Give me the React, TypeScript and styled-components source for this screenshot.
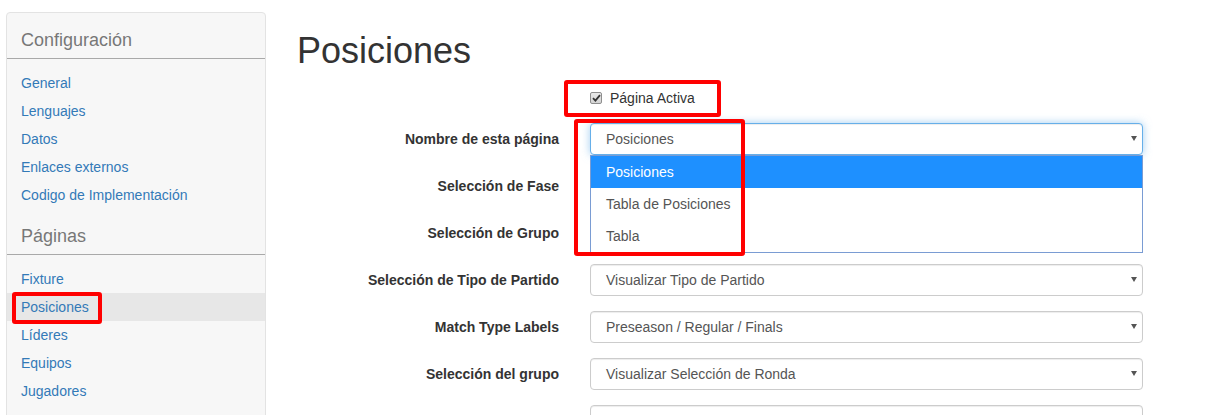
import React from "react";
import styled, { createGlobalStyle } from "styled-components";

const Global = createGlobalStyle`
  html, body { margin: 0; padding: 0; background: #fff; }
  body { font-family: "Liberation Sans", Arial, sans-serif; font-size: 14px; color: #333; }
  * { box-sizing: border-box; }
`;

const Page = styled.div`
  display: flex;
  align-items: flex-start;
  padding: 12px 0 0 6px;
  gap: 29px;
  height: 415px;
  overflow: hidden;
`;

const Sidebar = styled.nav`
  width: 260px;
  flex: 0 0 260px;
  background: #f7f7f7;
  border: 1px solid #e3e3e3;
  border-radius: 4px;
  padding-bottom: 40px;
`;

const SectionTitle = styled.div`
  margin-top: 17px;
  padding: 0 14px 8px;
  border-bottom: 1px solid #a9a9a9;
  font-size: 18px;
  line-height: 20px;
  color: #777;
`;

const LinkList = styled.ul`
  list-style: none;
  margin: 10px 0 0;
  padding: 0;
`;

const LinkItem = styled.li<{ $active?: boolean }>`
  position: relative;
  height: 28px;
  padding: 4px 14px;
  line-height: 20px;
  background: ${(p) => (p.$active ? "#e7e7e7" : "transparent")};
`;

const SideLink = styled.a`
  color: #337ab7;
  text-decoration: none;
  font-size: 14px;
`;

const Highlight = styled.span<{ $l: number; $t: number; $w: number; $h: number }>`
  position: absolute;
  left: ${(p) => p.$l}px;
  top: ${(p) => p.$t}px;
  width: ${(p) => p.$w}px;
  height: ${(p) => p.$h}px;
  border: 4px solid #ff0000;
  border-radius: 3px;
  pointer-events: none;
  z-index: 20;
`;

const Main = styled.main`
  flex: 1;
`;

const Title = styled.h1`
  margin: 19px 0 10px;
  padding-left: 2px;
  font-size: 36px;
  line-height: 1.1;
  font-weight: 400;
  color: #333;
`;

const Form = styled.div`
  display: grid;
  grid-template-columns: 264px 553px;
  column-gap: 31px;
  row-gap: 15px;
  align-items: center;
`;

const Label = styled.label`
  text-align: right;
  font-weight: 700;
  font-size: 14px;
  line-height: 20px;
  color: #333;
`;

const CheckRow = styled.div`
  position: relative;
  grid-column: 2;
  display: flex;
  align-items: center;
  gap: 8px;
  padding-top: 7px;
  height: 27px;
  line-height: 20px;
  color: #333;
`;

const CheckBox = styled.span`
  width: 12px;
  height: 12px;
  border: 1px solid #8e8e8e;
  border-radius: 2px;
  background: linear-gradient(#e8e8e8, #d4d4d4);
  display: inline-flex;
  align-items: center;
  justify-content: center;
`;

const SelectWrap = styled.div`
  position: relative;
`;

const SelectBox = styled.div<{ $focus?: boolean }>`
  height: 32px;
  border: 1px solid ${(p) => (p.$focus ? "#66afe9" : "#ccc")};
  border-radius: 4px;
  background: #fff;
  display: flex;
  align-items: center;
  justify-content: space-between;
  padding: 0 5px 0 15px;
  color: #555;
  font-size: 14px;
  box-shadow: ${(p) =>
    p.$focus
      ? "inset 0 1px 1px rgba(0,0,0,.075), 0 0 8px rgba(102,175,233,.6)"
      : "inset 0 1px 1px rgba(0,0,0,.075)"};
`;

const Arrow = styled.span`
  width: 0;
  height: 0;
  border-left: 3px solid transparent;
  border-right: 3px solid transparent;
  border-top: 5px solid #555;
`;

const DropList = styled.ul`
  position: absolute;
  left: 0;
  right: 0;
  top: 32px;
  margin: 0;
  padding: 0;
  list-style: none;
  background: #fff;
  border: 1px solid #7a9cd3;
  z-index: 10;
`;

const DropItem = styled.li<{ $selected?: boolean }>`
  height: 32px;
  line-height: 32px;
  padding-left: 15px;
  font-size: 14px;
  background: ${(p) => (p.$selected ? "#1e90ff" : "#fff")};
  color: ${(p) => (p.$selected ? "#fff" : "#555")};
`;

const configLinks = ["General", "Lenguajes", "Datos", "Enlaces externos", "Codigo de Implementación"];
const pageLinks = ["Fixture", "Posiciones", "Líderes", "Equipos", "Jugadores"];

const rows: { label: string; value: string }[] = [
  { label: "Selección de Fase", value: "" },
  { label: "Selección de Grupo", value: "" },
  { label: "Selección de Tipo de Partido", value: "Visualizar Tipo de Partido" },
  { label: "Match Type Labels", value: "Preseason / Regular / Finals" },
  { label: "Selección del grupo", value: "Visualizar Selección de Ronda" },
  { label: "", value: "" },
];

export default function App() {
  return (
    <>
      <Global />
      <Page>
        <Sidebar>
          <SectionTitle>Configuración</SectionTitle>
          <LinkList>
            {configLinks.map((l) => (
              <LinkItem key={l}>
                <SideLink href="#">{l}</SideLink>
              </LinkItem>
            ))}
          </LinkList>
          <SectionTitle>Páginas</SectionTitle>
          <LinkList>
            {pageLinks.map((l) => (
              <LinkItem key={l} $active={l === "Posiciones"}>
                <SideLink href="#">{l}</SideLink>
                {l === "Posiciones" && <Highlight $l={5} $t={-1} $w={90} $h={32} />}
              </LinkItem>
            ))}
          </LinkList>
        </Sidebar>
        <Main>
          <Title>Posiciones</Title>
          <Form>
            <CheckRow>
              <CheckBox>
                <svg width="9" height="8" viewBox="0 0 9 8">
                  <path d="M1 4.2 L3.4 6.6 L8 1.2" fill="none" stroke="#333" strokeWidth="1.8" />
                </svg>
              </CheckBox>
              <span>Página Activa</span>
              <Highlight $l={-26} $t={-1} $w={157} $h={37} />
            </CheckRow>
            <Label>Nombre de esta página</Label>
            <SelectWrap>
              <SelectBox $focus>
                <span>Posiciones</span>
                <Arrow />
              </SelectBox>
              <DropList>
                <DropItem $selected>Posiciones</DropItem>
                <DropItem>Tabla de Posiciones</DropItem>
                <DropItem>Tabla</DropItem>
              </DropList>
              <Highlight $l={-16} $t={-4} $w={171} $h={137} />
            </SelectWrap>
            {rows.map((r, i) => (
              <React.Fragment key={i}>
                <Label>{r.label}</Label>
                <SelectWrap>
                  <SelectBox>
                    <span>{r.value}</span>
                    <Arrow />
                  </SelectBox>
                </SelectWrap>
              </React.Fragment>
            ))}
          </Form>
        </Main>
      </Page>
    </>
  );
}
